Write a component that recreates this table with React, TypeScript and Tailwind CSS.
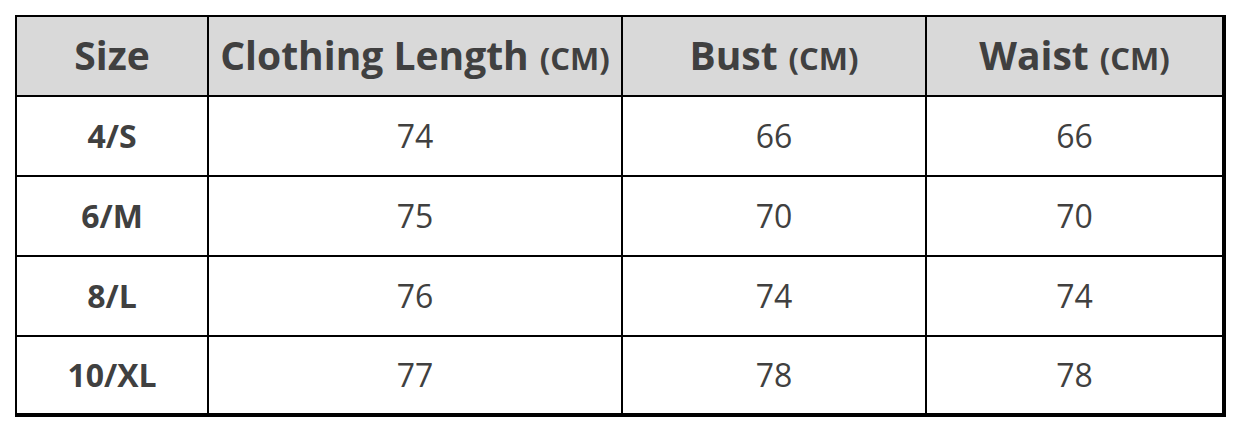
const rows = [
  ['4/S', '74', '66', '66'],
  ['6/M', '75', '70', '70'],
  ['8/L', '76', '74', '74'],
  ['10/XL', '77', '78', '78'],
]

const colClass = ['w-[192px] border-r-2', 'w-[414px] border-r-2', 'w-[304px] border-r-2', 'w-[295px]']

function Head({ label, unit }: { label: string; unit?: string }) {
  return (
    <span className="font-bold text-[39px] leading-none">
      {label}
      {unit && <span className="ml-[11px] text-[31px]">{unit}</span>}
    </span>
  )
}

export default function App() {
  return (
    <div className="h-[432px] w-[1242px] bg-white pl-[15px] pt-[15px] font-['Open_Sans','Noto_Sans',sans-serif] text-[#404040]">
      <div className="flex w-[1211px] flex-col border-t-2 border-l-2 border-r-4 border-b-4 border-black">
        <div className="flex h-[80px] border-b-2 border-black bg-[#d9d9d9]">
          <div className={`${colClass[0]} flex items-center justify-center border-black pb-[4px]`}>
            <Head label="Size" />
          </div>
          <div className={`${colClass[1]} flex items-center justify-center border-black pb-[4px]`}>
            <Head label="Clothing Length" unit="(CM)" />
          </div>
          <div className={`${colClass[2]} flex items-center justify-center border-black pb-[4px]`}>
            <Head label="Bust" unit="(CM)" />
          </div>
          <div className={`${colClass[3]} flex items-center justify-center border-black pb-[4px]`}>
            <Head label="Waist" unit="(CM)" />
          </div>
        </div>
        {rows.map((r, i) => (
          <div
            key={r[0]}
            className={i < rows.length - 1 ? 'flex h-[80px] border-b-2 border-black' : 'flex h-[76px]'}
          >
            {r.map((v, j) => (
              <div
                key={j}
                className={`${colClass[j]} flex items-center justify-center border-black text-[32px] ${
                  j === 0 ? 'font-bold' : 'font-normal'
                }`}
              >
                {v}
              </div>
            ))}
          </div>
        ))}
      </div>
    </div>
  )
}
